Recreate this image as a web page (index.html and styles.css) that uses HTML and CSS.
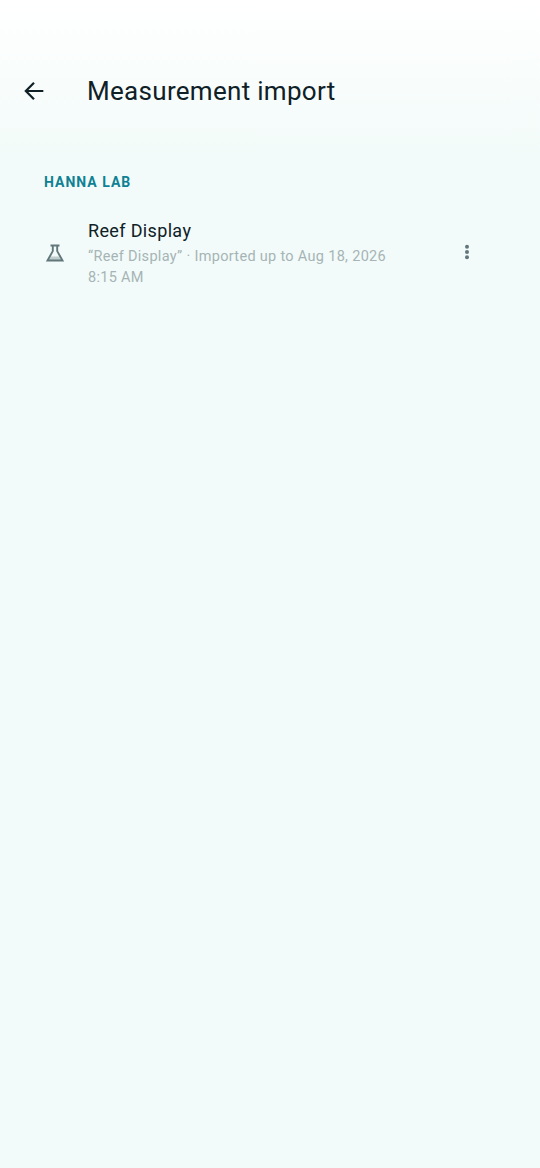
FILE: index.html
```html
<!DOCTYPE html>
<html lang="en">
<head>
<meta charset="utf-8">
<title>Measurement import</title>
<link rel="stylesheet" href="styles.css">
</head>
<body>
<div class="screen">
  <header class="topbar">
    <svg class="back" viewBox="0 0 24 24" width="28" height="28"><path d="M20 12H5M12 5l-7 7 7 7" fill="none" stroke="#0f2027" stroke-width="1.900"/></svg>
    <h1 class="title">Measurement import</h1>
  </header>
  <h2 class="section">HANNA LAB</h2>
  <div class="row">
    <svg class="flask" viewBox="0 0 24 24" width="24" height="24"><path d="M7.500 4.500h9M9.800 4.500v5.600L4.500 19.500h15L14.200 10.100V4.500" fill="none" stroke="#62777c" stroke-width="1.900"/><path d="M7.800 15.500h8.400l2 3.500H5.800z" fill="#62777c" fill-opacity="0.35"/></svg>
    <div class="texts">
      <div class="name">Reef Display</div>
      <div class="desc">“Reef Display” · Imported up to Aug 18, 2026 8:15 AM</div>
    </div>
    <svg class="more" viewBox="0 0 24 24" width="24" height="24"><circle cx="12" cy="6.800" r="2" fill="#62777c"/><circle cx="12" cy="12" r="2" fill="#62777c"/><circle cx="12" cy="17.200" r="2" fill="#62777c"/></svg>
  </div>
</div>
</body>
</html>
```
FILE: styles.css
```css
html, body {
  margin: 0;
  padding: 0;
}
.screen {
  width: 540px;
  height: 1168px;
  overflow: hidden;
  background: linear-gradient(to bottom, #ffffff 0, #f2fbf9 160px, #f2fbf9 100%);
  font-family: Roboto, "Liberation Sans", sans-serif;
}
.topbar {
  display: flex;
  align-items: center;
  height: 56px;
  padding: 63px 0 0 20px;
}
.back {
  flex: none;
}
.title {
  margin: 0 0 0 39px;
  font-size: 26px;
  font-weight: 400;
  line-height: 32px;
  letter-spacing: 0.3px;
  color: #0f2027;
}
.section {
  margin: 53px 0 0 44px;
  font-size: 14px;
  font-weight: 700;
  line-height: 20px;
  letter-spacing: 1px;
  color: #0f8194;
}
.row {
  display: flex;
  align-items: center;
  margin-top: 24px;
  padding-left: 43px;
}
.flask {
  flex: none;
  margin-top: 2px;
}
.texts {
  width: 310px;
  margin-left: 21px;
}
.name {
  font-size: 18px;
  line-height: 30px;
  letter-spacing: 0.35px;
  color: #0f2027;
}
.desc {
  font-size: 14.500px;
  line-height: 21px;
  letter-spacing: 0.31px;
  color: #a6b4b6;
}
.more {
  flex: none;
  margin-left: 57px;
}
```
